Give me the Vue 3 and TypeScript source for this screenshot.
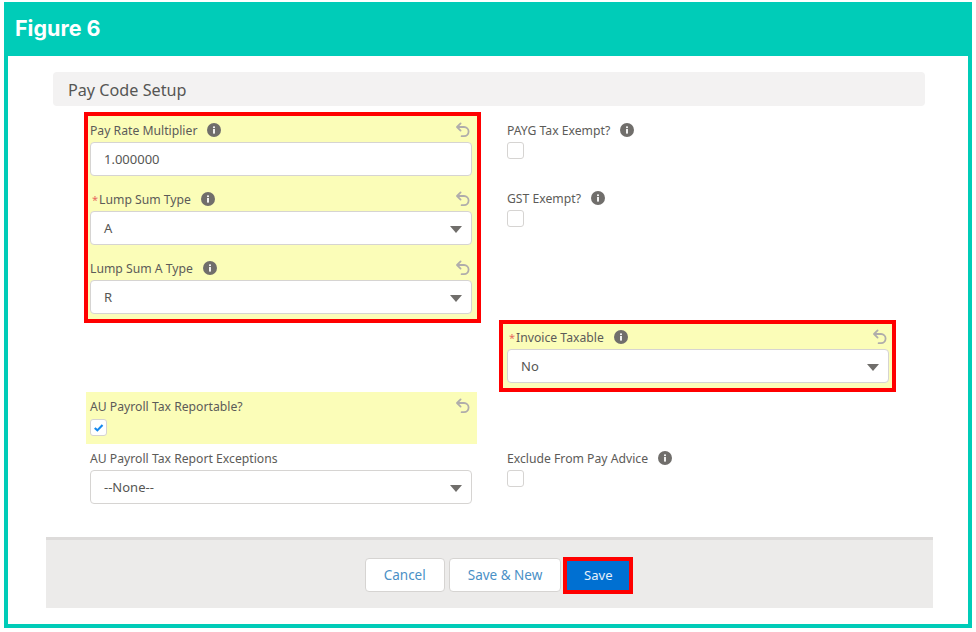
<script setup lang="ts">
type Field = {
  label: string;
  kind: "input" | "select" | "check";
  value?: string;
  checked?: boolean;
  required?: boolean;
  info?: boolean;
  undo?: boolean;
};

type Group = {
  cls: string;
  fields: Field[];
};

const leftGroups: Group[] = [
  {
    cls: "boxed",
    fields: [
      { label: "Pay Rate Multiplier", kind: "input", value: "1.000000", info: true, undo: true },
      { label: "Lump Sum Type", kind: "select", value: "A", required: true, info: true, undo: true },
      { label: "Lump Sum A Type", kind: "select", value: "R", info: true, undo: true },
    ],
  },
  {
    cls: "changed",
    fields: [{ label: "AU Payroll Tax Reportable?", kind: "check", checked: true, undo: true }],
  },
  {
    cls: "plain",
    fields: [{ label: "AU Payroll Tax Report Exceptions", kind: "select", value: "--None--" }],
  },
];

const rightGroups: Group[] = [
  {
    cls: "plain first",
    fields: [
      { label: "PAYG Tax Exempt?", kind: "check", info: true },
      { label: "GST Exempt?", kind: "check", info: true },
    ],
  },
  {
    cls: "boxed invoice",
    fields: [{ label: "Invoice Taxable", kind: "select", value: "No", required: true, info: true, undo: true }],
  },
  {
    cls: "plain last",
    fields: [{ label: "Exclude From Pay Advice", kind: "check", info: true }],
  },
];

const columns = [
  { id: "left", groups: leftGroups },
  { id: "right", groups: rightGroups },
];
</script>

<template>
  <div class="frame">
    <header class="figure-title">Figure 6</header>
    <main class="body">
      <h2 class="section">Pay Code Setup</h2>
      <div class="form">
        <div v-for="col in columns" :key="col.id" class="column" :class="col.id">
          <div v-for="(group, g) in col.groups" :key="g" class="group" :class="group.cls">
            <div v-for="field in group.fields" :key="field.label" class="field">
              <div class="label-row">
                <span class="label">
                  <span v-if="field.required" class="req">*</span>{{ field.label }}
                </span>
                <svg v-if="field.info" class="info" viewBox="0 0 14 14" aria-hidden="true">
                  <circle cx="7" cy="7" r="7" fill="#706e6b" />
                  <rect x="6.1" y="6" width="1.8" height="4.6" fill="#fff" />
                  <rect x="6.1" y="3.4" width="1.8" height="1.7" fill="#fff" />
                </svg>
                <svg v-if="field.undo" class="undo" viewBox="0 0 16 16" fill="none" aria-hidden="true">
                  <path
                    d="M5.6 1.4 2 5l3.6 3.6M2.4 5H9a4.6 4.6 0 0 1 0 9.2H6.6"
                    stroke="#b0adab"
                    stroke-width="1.8"
                    stroke-linecap="round"
                    stroke-linejoin="round"
                  />
                </svg>
              </div>
              <div v-if="field.kind === 'input'" class="control">{{ field.value }}</div>
              <div v-else-if="field.kind === 'select'" class="control">
                {{ field.value }}
                <span class="caret"></span>
              </div>
              <div v-else class="check">
                <svg v-if="field.checked" viewBox="0 0 12 12" fill="none" aria-hidden="true">
                  <path d="M3 6.4 5.1 8.3 9.2 4" stroke="#1589ee" stroke-width="1.7" />
                </svg>
              </div>
            </div>
          </div>
        </div>
      </div>
      <footer class="actions">
        <button class="btn">Cancel</button>
        <button class="btn">Save &amp; New</button>
        <span class="save-box"><button class="btn brand">Save</button></span>
      </footer>
    </main>
  </div>
</template>

<style scoped>
.frame {
  box-sizing: border-box;
  width: 968px;
  height: 626px;
  margin: 2px 0 0 4px;
  border: 4px solid #00ccb8;
  border-top: 0;
  display: flex;
  flex-direction: column;
  font-family: "Noto Sans", "Open Sans", sans-serif;
  color: #5c5b58;
  background: #fff;
}

.figure-title {
  height: 54px;
  flex: none;
  margin: 0 -4px;
  padding-left: 11px;
  background: #00ccb8;
  color: #fff;
  font-family: Inter, "Open Sans", sans-serif;
  font-size: 21.5px;
  font-weight: 700;
  line-height: 52px;
}

.body {
  flex: 1;
  display: flex;
  flex-direction: column;
  padding: 16px 0 16px 38px;
}

.section {
  box-sizing: border-box;
  width: 872px;
  height: 34px;
  margin: 0 0 0 7px;
  padding-left: 15px;
  background: #f3f2f2;
  border-radius: 4px;
  font-size: 16.2px;
  font-weight: 400;
  line-height: 37px;
  color: #565654;
}

.form {
  display: grid;
  grid-template-columns: 391px 391px;
  column-gap: 25px;
  margin-left: 40px;
}

.column {
  display: flex;
  flex-direction: column;
  align-items: flex-start;
}

.group {
  display: flex;
  flex-direction: column;
  gap: 9px;
  width: 391px;
  box-sizing: border-box;
}

.field {
  padding-top: 2px;
}

.plain {
  padding-left: 4px;
}

.right .plain {
  padding-left: 5px;
}

.first {
  gap: 25px;
  margin-top: 10px;
  height: 138px;
}

.last {
  margin-top: 52px;
}

.boxed {
  width: 397px;
  margin: 6px 0 0 -2px;
  padding: 0 5px 5px 2px;
  border: 4px solid #f00;
  background: #fbfdb8;
}

.invoice {
  margin: 66px 0 0 -3px;
  padding: 0 4px 5px 4px;
}

.invoice .field {
  padding-top: 1px;
}

.changed {
  height: 52px;
  margin-top: 69px;
  padding-left: 4px;
  background: #fbfdb8;
}

.changed .check {
  margin-top: 1px;
}

.label-row {
  display: flex;
  align-items: center;
  width: 382px;
  height: 24px;
}

.label {
  font-size: 12.2px;
  white-space: nowrap;
}

.req {
  color: #e8695f;
  font-size: 11px;
  margin: 0 1px 0 2px;
}

.info {
  width: 14px;
  height: 14px;
  margin-left: 10px;
  flex: none;
}

.undo {
  width: 16px;
  height: 16px;
  margin-left: auto;
  margin-right: 1px;
  flex: none;
}

.control {
  box-sizing: border-box;
  position: relative;
  width: 382px;
  height: 34px;
  padding-left: 13px;
  border: 1px solid #d6d4d2;
  border-radius: 4px;
  background: #fff;
  font-size: 13px;
  line-height: 33px;
  color: #565654;
}

.caret {
  position: absolute;
  right: 9px;
  top: 14px;
  width: 0;
  height: 0;
  border-left: 6px solid transparent;
  border-right: 6px solid transparent;
  border-top: 7px solid #706e6b;
}

.check {
  box-sizing: border-box;
  width: 17px;
  height: 17px;
  border: 1px solid #d6d4d2;
  border-radius: 3px;
  background: #fff;
}

.check svg {
  display: block;
  width: 15px;
  height: 15px;
}

.actions {
  box-sizing: border-box;
  width: 887px;
  height: 71px;
  margin-top: auto;
  padding: 2px 0 0 19px;
  display: flex;
  align-items: center;
  justify-content: center;
  gap: 4px;
  background: #ecebea;
  border-top: 3px solid #dddbda;
}

.btn {
  box-sizing: border-box;
  height: 34px;
  padding: 0 18px;
  border: 1px solid #d6d4d2;
  border-radius: 4px;
  background: #fff;
  color: #4a90c6;
  font-family: inherit;
  font-size: 13.5px;
}

.save-box {
  display: flex;
  margin-left: -2px;
  border: 4px solid #f00;
}

.brand {
  height: 29px;
  width: 62px;
  padding: 0;
  border: 0;
  border-radius: 0;
  background: #0070d2;
  color: #e6f0fa;
  font-size: 13px;
}
</style>
